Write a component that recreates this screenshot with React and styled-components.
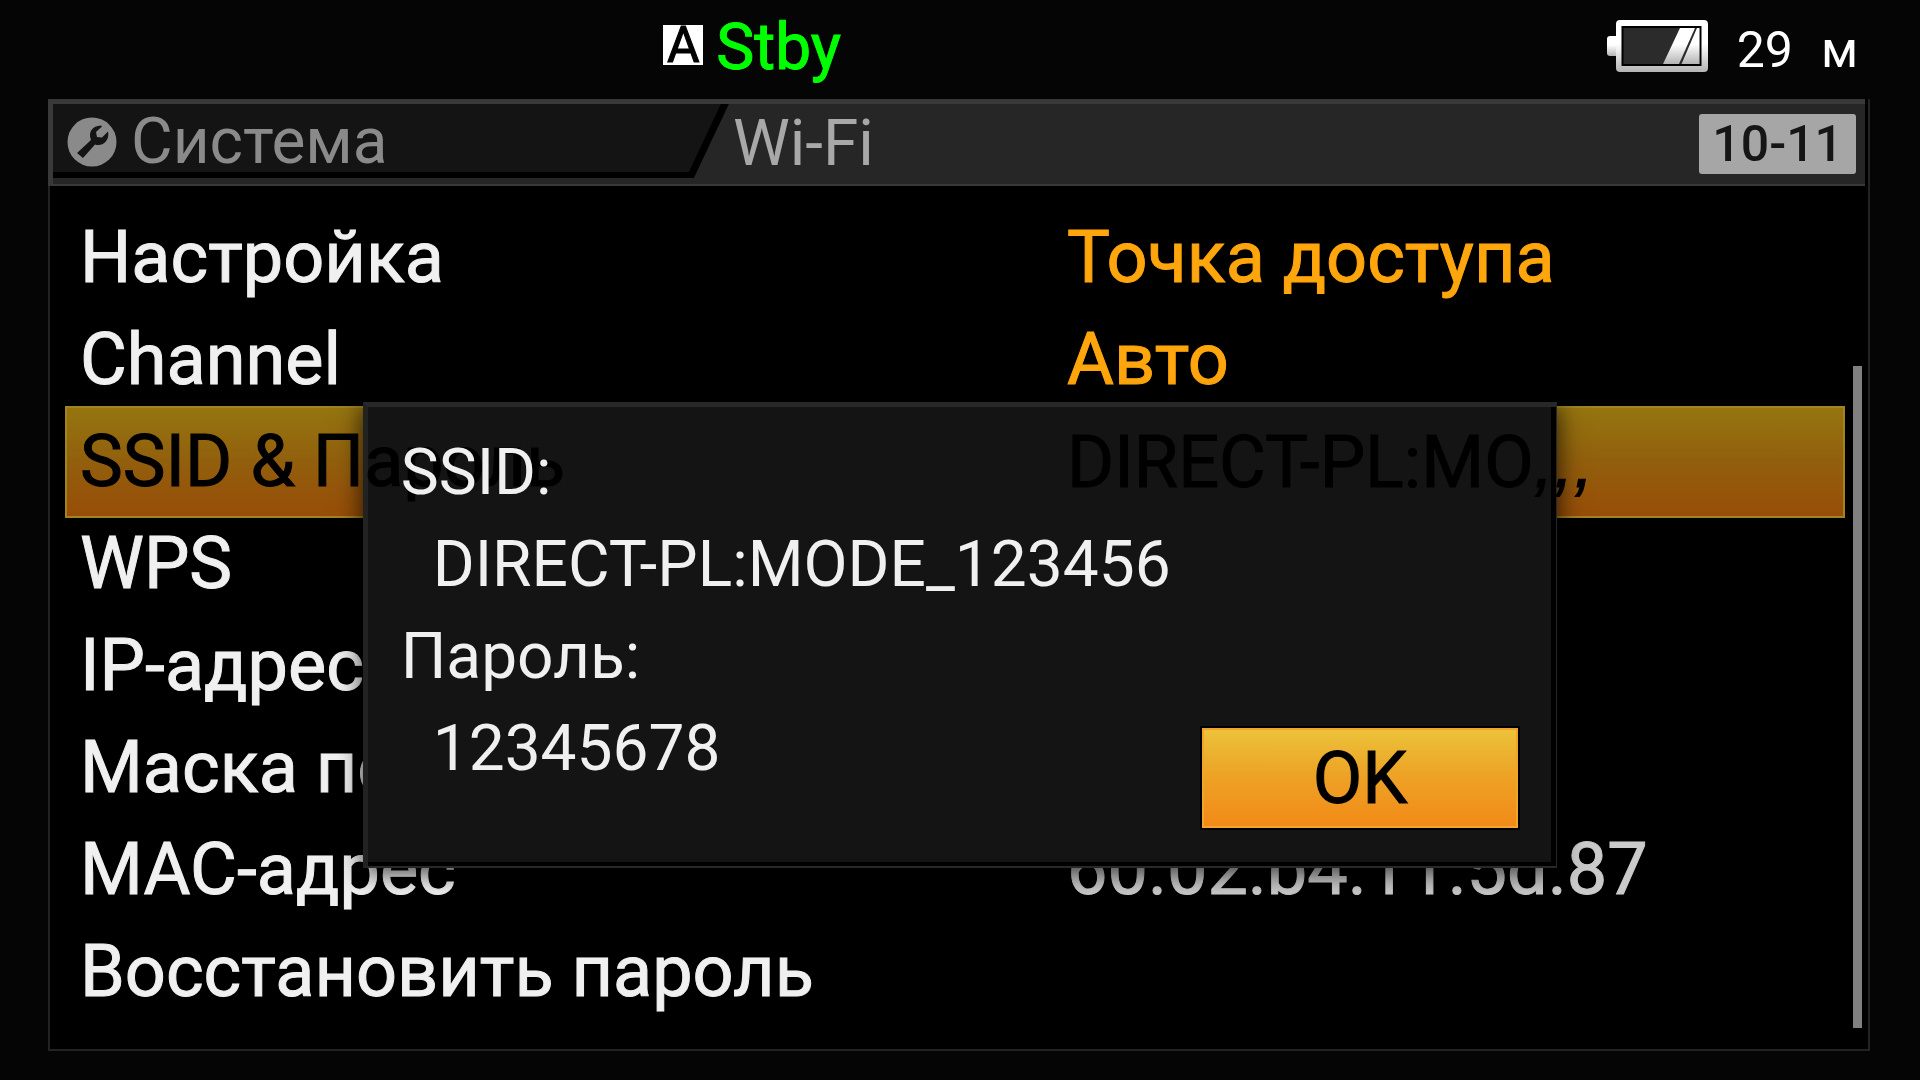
import styled, { createGlobalStyle } from "styled-components";

const color = {
  page: "#050505",
  line: "#393939",
  edge: "#232323",
  bar: "#262626",
  surface: "#141414",
  text: "#f0f0f0",
  muted: "#8a8a8a",
  orange: "#ffa60d",
};

const GlobalStyle = createGlobalStyle`
  * {
    box-sizing: border-box;
  }

  body {
    margin: 0;
    background-color: ${color.page};
    color: ${color.text};
    font-family: Roboto, "Liberation Sans", sans-serif;
  }

  button {
    border: none;
    background: none;
    color: inherit;
    font: inherit;
    cursor: pointer;
  }
`;

const Screen = styled.main`
  display: flex;
  flex-direction: column;
  min-height: 100vh;
  padding: 0 50px 28px 48px;
`;

const StatusBar = styled.header`
  display: grid;
  grid-template-columns: 1fr 1fr;
  align-items: center;
  height: 99px;
  padding: 0 12px 4px 0;
`;

const Recording = styled.div`
  display: flex;
  align-items: center;
  justify-content: flex-end;
  gap: 13px;
  padding-right: 112px;
  color: #00ff00;
  font-size: 64px;
  line-height: 72px;
  -webkit-text-stroke: 1px;
`;

const ModeMark = styled.span`
  width: 40px;
  margin-bottom: 6px;
  background-color: #fff;
  color: #000;
  font-size: 50px;
  line-height: 40px;
  text-align: center;
`;

const Power = styled.div`
  display: flex;
  align-items: center;
  justify-content: flex-end;
  gap: 28px;
  padding-top: 4px;
  color: #fff;
  font-size: 50px;
  line-height: 72px;

  svg {
    margin-bottom: 8px;
  }
`;

const Panel = styled.section`
  position: relative;
  border: 2px solid ${color.edge};
  border-top: 0;
  background-color: #000;
`;

const TitleBar = styled.div`
  display: flex;
  align-items: stretch;
  height: 87px;
  margin: 0 3px 0 -2px;
  border: solid ${color.line};
  border-width: 5px 0 2px 5px;
  background-color: ${color.bar};
`;

const Tab = styled.div`
  width: 37.3%;
  height: 74px;
  padding: 0 6px 6px 0;
  background-color: #000;
  clip-path: polygon(0 0, 100% 0, calc(100% - 35px) 100%, 0 100%);

  h2 {
    display: flex;
    align-items: center;
    gap: 14px;
    height: 100%;
    margin: 0;
    padding: 8px 14px 0;
    background-color: ${color.surface};
    clip-path: polygon(0 0, calc(100% - 2px) 0, calc(100% - 34px) 100%, 0 100%);
    color: ${color.muted};
    font-size: 64px;
    font-weight: 400;
    line-height: 60px;
  }
`;

const PageTitle = styled.h1`
  flex: 1;
  margin: 0;
  padding-left: 4px;
  color: #a8a8a8;
  font-size: 64px;
  font-weight: 400;
  line-height: 80px;
`;

const PageNumber = styled.span`
  align-self: flex-start;
  height: 60px;
  margin: 10px 9px 0 0;
  padding: 0 13px;
  border-radius: 3px;
  background-color: #a6a6a6;
  color: #161616;
  font-size: 50px;
  font-weight: 500;
  line-height: 60px;
`;

const Content = styled.div`
  display: flex;
  gap: 8px;
  padding: 21px 6px 26px 15px;
`;

const Menu = styled.ul`
  flex: 1;
  margin: 0;
  padding: 0;
  list-style: none;
`;

const Row = styled.button`
  display: grid;
  grid-template-columns: 56.4% 1fr;
  align-items: center;
  width: 100%;
  height: ${({ $selected }) => ($selected ? "112px" : "102px")};
  margin: ${({ $selected }) => ($selected ? "-5px 0" : "0")};
  padding: ${({ $selected }) => ($selected ? "0 13px" : "0 15px")};
  border: ${({ $selected }) => ($selected ? "2px solid #a08420" : "0")};
  background: ${({ $selected }) =>
    $selected
      ? "linear-gradient(#957510, #925f0d 50%, #984d08)"
      : "transparent"};
  color: ${({ $selected }) => ($selected ? "#000" : color.text)};
  font-size: 72px;
  line-height: 96px;
  text-align: left;
  white-space: nowrap;
  -webkit-text-stroke: 1px;

  /* the selected row still shows through the dialog as dark lettering */
  > span {
    z-index: ${({ $selected }) => ($selected ? 2 : "auto")};
  }
`;

const Value = styled.span`
  color: ${({ $tone }) => $tone || "inherit"};
`;

const Cut = styled.i`
  font-family: "Liberation Sans", sans-serif;
`;

const ScrollThumb = styled.div`
  width: 9px;
  margin-top: 159px;
  margin-bottom: -5px;
  background-color: #808080;
`;

const Dialog = styled.section`
  position: absolute;
  top: 303px;
  left: 17.2%;
  display: flex;
  width: 65.7%;
  padding: 25px 39px 40px 38px;

  &::before {
    content: "";
    position: absolute;
    inset: 0;
    z-index: 1;
    border: solid;
    border-width: 5px 1px 2px 5px;
    border-color: #282828 #282828 #282828 #222;
    background-color: ${color.surface};
    box-shadow: inset -5px -4px #000, 0 4px 24px rgba(0, 0, 0, 0.8);
  }
`;

const Credentials = styled.dl`
  position: relative;
  z-index: 3;
  flex: 1;
  min-width: 0;
  margin: 0;
  padding-bottom: 33px;
  font-size: 64px;
  line-height: 92px;
  white-space: nowrap;

  dd {
    margin: 0 0 0 32px;
  }
`;

const OkButton = styled.button`
  position: relative;
  z-index: 3;
  align-self: flex-end;
  width: 316px;
  height: 100px;
  border: 2px solid #f0a528;
  background: linear-gradient(#ecc23a, #eda426 45%, #f28a18);
  box-shadow: 0 0 0 2px #000;
  color: #000;
  font-size: 72px;
  line-height: 96px;
  -webkit-text-stroke: 1px;
`;

const Wrench = () => (
  <svg width="50" height="50" viewBox="0 0 50 50" aria-hidden="true">
    <circle cx="25" cy="25" r="24.5" fill={color.muted} />
    <path
      d="M10 36 L24 23 C21 15 25 9 34 8.5 L35 9.5 L29 15 L30 20 L35 20.5 L41 14.5 C43 23 36 30 28 27.5 L16 41 Z"
      fill={color.surface}
    />
  </svg>
);

const Battery = () => (
  <svg width="102" height="54" viewBox="0 0 102 54" role="img" aria-label="Battery">
    <defs>
      <linearGradient id="shell" x1="0" y1="0" x2="0" y2="1">
        <stop offset="0.45" stopColor="#fff" />
        <stop offset="1" stopColor="#b4b4b4" />
      </linearGradient>
    </defs>
    <rect x="0" y="17" width="12" height="20" rx="3" fill="url(#shell)" />
    <rect x="9" y="1" width="92" height="52" rx="4" fill="url(#shell)" />
    <rect x="14.5" y="7" width="80" height="40" fill="#000" />
    <rect x="16.5" y="9" width="76" height="36" fill="#2b2b2b" />
    <path d="M73 9 H88 L72 45 H56 Z" fill="url(#shell)" />
    <path d="M90 9 H92.5 V45 H74.5 Z" fill="url(#shell)" />
  </svg>
);

const items = [
  { label: "Настройка", value: "Точка доступа", tone: color.orange },
  { label: "Channel", value: "Авто", tone: color.orange },
  { label: "SSID & Пароль", value: "DIRECT-PL:MO", cut: true, selected: true },
  { label: "WPS" },
  { label: "IP-адрес" },
  { label: "Маска подсети" },
  { label: "MAC-адрес", value: "60.02.b4.11.5d.87", tone: "#cacaca" },
  { label: "Восстановить пароль" },
];

const App = () => {
  return (
    <>
      <GlobalStyle />
      <Screen>
        <StatusBar>
          <Recording>
            <ModeMark>A</ModeMark>
            <span>Stby</span>
          </Recording>
          <Power>
            <Battery />
            <span>29</span>
            <span>м</span>
          </Power>
        </StatusBar>
        <Panel>
          <TitleBar>
            <Tab>
              <h2>
                <Wrench />
                Система
              </h2>
            </Tab>
            <PageTitle>Wi-Fi</PageTitle>
            <PageNumber>10-11</PageNumber>
          </TitleBar>
          <Content>
            <Menu>
              {items.map(({ label, value, tone, cut, selected }) => (
                <li key={label}>
                  <Row type="button" $selected={selected}>
                    <span>{label}</span>
                    {value && (
                      <Value $tone={tone}>
                        {value}
                        {cut && <Cut>,,,</Cut>}
                      </Value>
                    )}
                  </Row>
                </li>
              ))}
            </Menu>
            <ScrollThumb />
          </Content>
          <Dialog role="dialog" aria-label="SSID & Пароль">
            <Credentials>
              <dt>SSID:</dt>
              <dd>DIRECT-PL:MODE_123456</dd>
              <dt>Пароль:</dt>
              <dd>12345678</dd>
            </Credentials>
            <OkButton type="button">OK</OkButton>
          </Dialog>
        </Panel>
      </Screen>
    </>
  );
};

export default App;
